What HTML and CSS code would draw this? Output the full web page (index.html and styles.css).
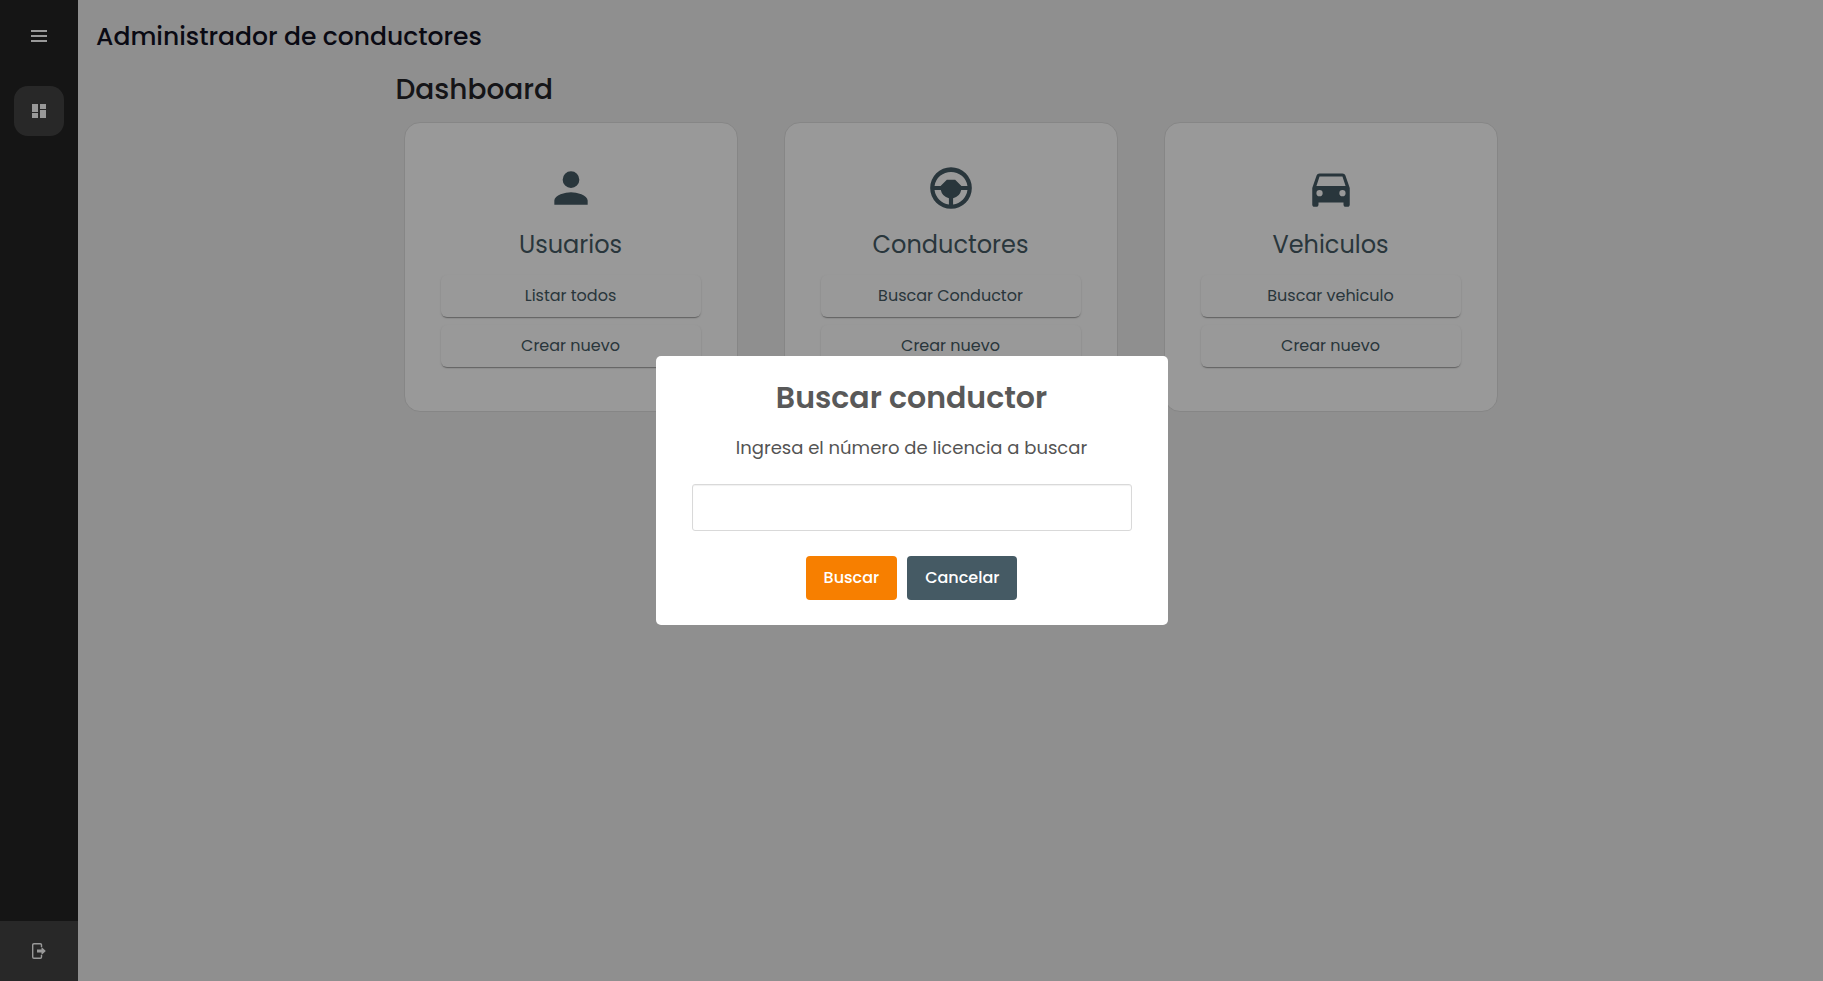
FILE: index.html
```html
<!DOCTYPE html>
<html lang="es">
<head>
<meta charset="utf-8">
<meta name="viewport" content="width=device-width, initial-scale=1">
<title>Administrador de conductores</title>
<link rel="stylesheet" href="styles.css">
</head>
<body>
<div class="app">
  <aside class="sidebar">
    <button class="menu-toggle" type="button" aria-label="Abrir menú">
      <svg viewBox="0 0 16 12" width="16" height="12"><path d="M0 0h16v2H0zM0 5h16v2H0zM0 10h16v2H0z"/></svg>
    </button>
    <nav class="nav">
      <a class="nav-item" href="#dashboard" aria-label="Dashboard">
        <svg viewBox="0 0 14 14" width="14" height="14"><path d="M0 0h6v8H0zM8 0h6v5H8zM0 9h6v5H0zM8 6h6v8H8z"/></svg>
      </a>
    </nav>
    <a class="logout" href="#salir" aria-label="Salir">
      <svg viewBox="0 0 14 16" width="14" height="16"><path class="door" d="M9.500 4V2q0-1.300-1.300-1.300H2Q.7.700.7 2v12q0 1.300 1.300 1.300h6.200q1.300 0 1.300-1.300v-2"/><path d="M5 6.500h4.500V4l4.300 4-4.300 4V9.500H5z"/></svg>
    </a>
  </aside>

  <main class="main">
    <header class="topbar"><h1 class="app-title">Administrador de conductores</h1></header>
    <div class="container">
      <h2 class="page-title">Dashboard</h2>
      <div class="cards">
        <section class="card">
          <svg class="card-icon" viewBox="0 0 24 24"><path d="M12 12a4 4 0 1 0 0-8 4 4 0 0 0 0 8zm0 2c-2.670 0-8 1.340-8 4v2h16v-2c0-2.660-5.330-4-8-4z"/></svg>
          <h3 class="card-title">Usuarios</h3>
          <button class="card-button" type="button">Listar todos</button>
          <button class="card-button" type="button">Crear nuevo</button>
        </section>
        <section class="card">
          <svg class="card-icon" viewBox="0 0 24 24"><path fill-rule="evenodd" d="M12 2a10 10 0 1 0 0 20 10 10 0 0 0 0-20zM4.100 11A8 8 0 0 1 19.900 11H17l-3-3h-4l-3 3zM4.100 13H7.100A5 5 0 0 0 11 16.900v3A8 8 0 0 1 4.100 13zM13 19.900v-3A5 5 0 0 0 16.900 13h3A8 8 0 0 1 13 19.900z"/></svg>
          <h3 class="card-title">Conductores</h3>
          <button class="card-button" type="button">Buscar Conductor</button>
          <button class="card-button" type="button">Crear nuevo</button>
        </section>
        <section class="card">
          <svg class="card-icon" viewBox="0 0 24 24"><path fill-rule="evenodd" d="M18.920 6.010C18.720 5.420 18.160 5 17.500 5h-11c-.66 0-1.210.42-1.420 1.010L3 12v8c0 .55.45 1 1 1h1c.55 0 1-.45 1-1v-1h12v1c0 .55.45 1 1 1h1c.55 0 1-.45 1-1v-8zM6.500 16a1.500 1.500 0 1 1 0-3 1.500 1.500 0 0 1 0 3zm11 0a1.500 1.500 0 1 1 0-3 1.500 1.500 0 0 1 0 3zM5 11l1.500-4.500h11L19 11z"/></svg>
          <h3 class="card-title">Vehiculos</h3>
          <button class="card-button" type="button">Buscar vehiculo</button>
          <button class="card-button" type="button">Crear nuevo</button>
        </section>
      </div>
    </div>
  </main>
</div>

<div class="overlay">
  <form class="modal" role="dialog" aria-modal="true" aria-labelledby="modal-title">
    <h2 class="modal-title" id="modal-title">Buscar conductor</h2>
    <label class="modal-label" for="licencia">Ingresa el número de licencia a buscar</label>
    <input class="modal-input" id="licencia" type="text">
    <div class="modal-actions">
      <button class="action confirm" type="submit">Buscar</button>
      <button class="action cancel" type="button">Cancelar</button>
    </div>
  </form>
</div>
</body>
</html>
```
FILE: styles.css
```css
* { box-sizing: border-box; }

body {
  margin: 0;
  background: #eee;
  font-family: Poppins, Inter, sans-serif;
}

h1, h2, h3 { margin: 0; }

button, input { font-family: inherit; }

button { border: 0; cursor: pointer; }

svg { display: block; fill: currentColor; }

.app { display: flex; min-height: 100vh; }

.sidebar {
  flex: 0 0 78px;
  display: flex;
  flex-direction: column;
  align-items: center;
  background: #232323;
  color: #fff;
}

.menu-toggle {
  width: 100%;
  height: 72px;
  display: grid;
  place-items: center;
  padding: 0;
  background: none;
  color: #fff;
}

.nav { flex: 1; padding-top: 14px; }

.nav-item {
  width: 50px;
  height: 50px;
  display: grid;
  place-items: center;
  border-radius: 14px;
  background: #444;
  color: #fff;
}

.logout {
  width: 100%;
  height: 60px;
  display: grid;
  place-items: center;
  background: #444;
  color: #fff;
}

.door { fill: none; stroke: currentColor; stroke-width: 1.4; }

.main { flex: 1; min-width: 0; }

.topbar { padding: 17px 18px 0; }

.app-title {
  color: #111122;
  font-size: 25px;
  line-height: 40px;
  font-weight: 500;
}

.container { max-width: 1110px; margin: 0 auto; padding-top: 13px; }

.page-title {
  color: #232428;
  font-size: 28px;
  line-height: 40px;
  font-weight: 500;
}

.cards {
  display: grid;
  grid-template-columns: repeat(3, 1fr);
  gap: 46px;
  padding: 12px 8px;
}

.card {
  display: flex;
  flex-direction: column;
  gap: 8px;
  padding: 40px 36px 44px;
  border: 1px solid #dfdfdf;
  border-radius: 16px;
  background: #fff;
  color: #455a64;
}

.card-icon { width: 50px; height: 50px; align-self: center; }

.card-title {
  padding: 4px 0 2px;
  font-size: 24px;
  line-height: 40px;
  font-weight: 400;
  text-align: center;
}

.card-button {
  height: 42px;
  padding: 0 6px 2px;
  border-radius: 6px;
  background: #fff;
  box-shadow: 0 2px 1px -1px rgba(0, 0, 0, .25), 0 1px 2px rgba(0, 0, 0, .18);
  color: #455a64;
  font-size: 16px;
}

.overlay {
  position: fixed;
  inset: 0;
  display: flex;
  align-items: center;
  justify-content: center;
  background: rgba(0, 0, 0, .4);
}

.modal {
  width: 512px;
  max-width: 100%;
  display: flex;
  flex-direction: column;
  padding: 20px 36px 25px;
  border-radius: 5px;
  background: #fff;
}

.modal-title {
  color: #595959;
  font-size: 30px;
  line-height: 44px;
  font-weight: 600;
  text-align: center;
}

.modal-label {
  padding: 14px 0 22px;
  color: #545454;
  font-size: 18px;
  line-height: 28px;
  text-align: center;
}

.modal-input {
  width: 100%;
  height: 47px;
  padding: 0 12px;
  border: 1px solid #d9d9d9;
  border-radius: 3px;
  background: #fff;
  box-shadow: inset 0 1px 1px rgba(0, 0, 0, .06);
  color: #545454;
  font-size: 18px;
}

.modal-actions {
  display: flex;
  justify-content: center;
  gap: 10px;
  padding-top: 25px;
}

.action {
  height: 44px;
  padding: 0 18px 2px;
  border-radius: 4px;
  color: #fff;
  font-size: 16px;
  font-weight: 500;
}

.confirm { background: #f77f00; }

.cancel { background: #455a64; }
```
